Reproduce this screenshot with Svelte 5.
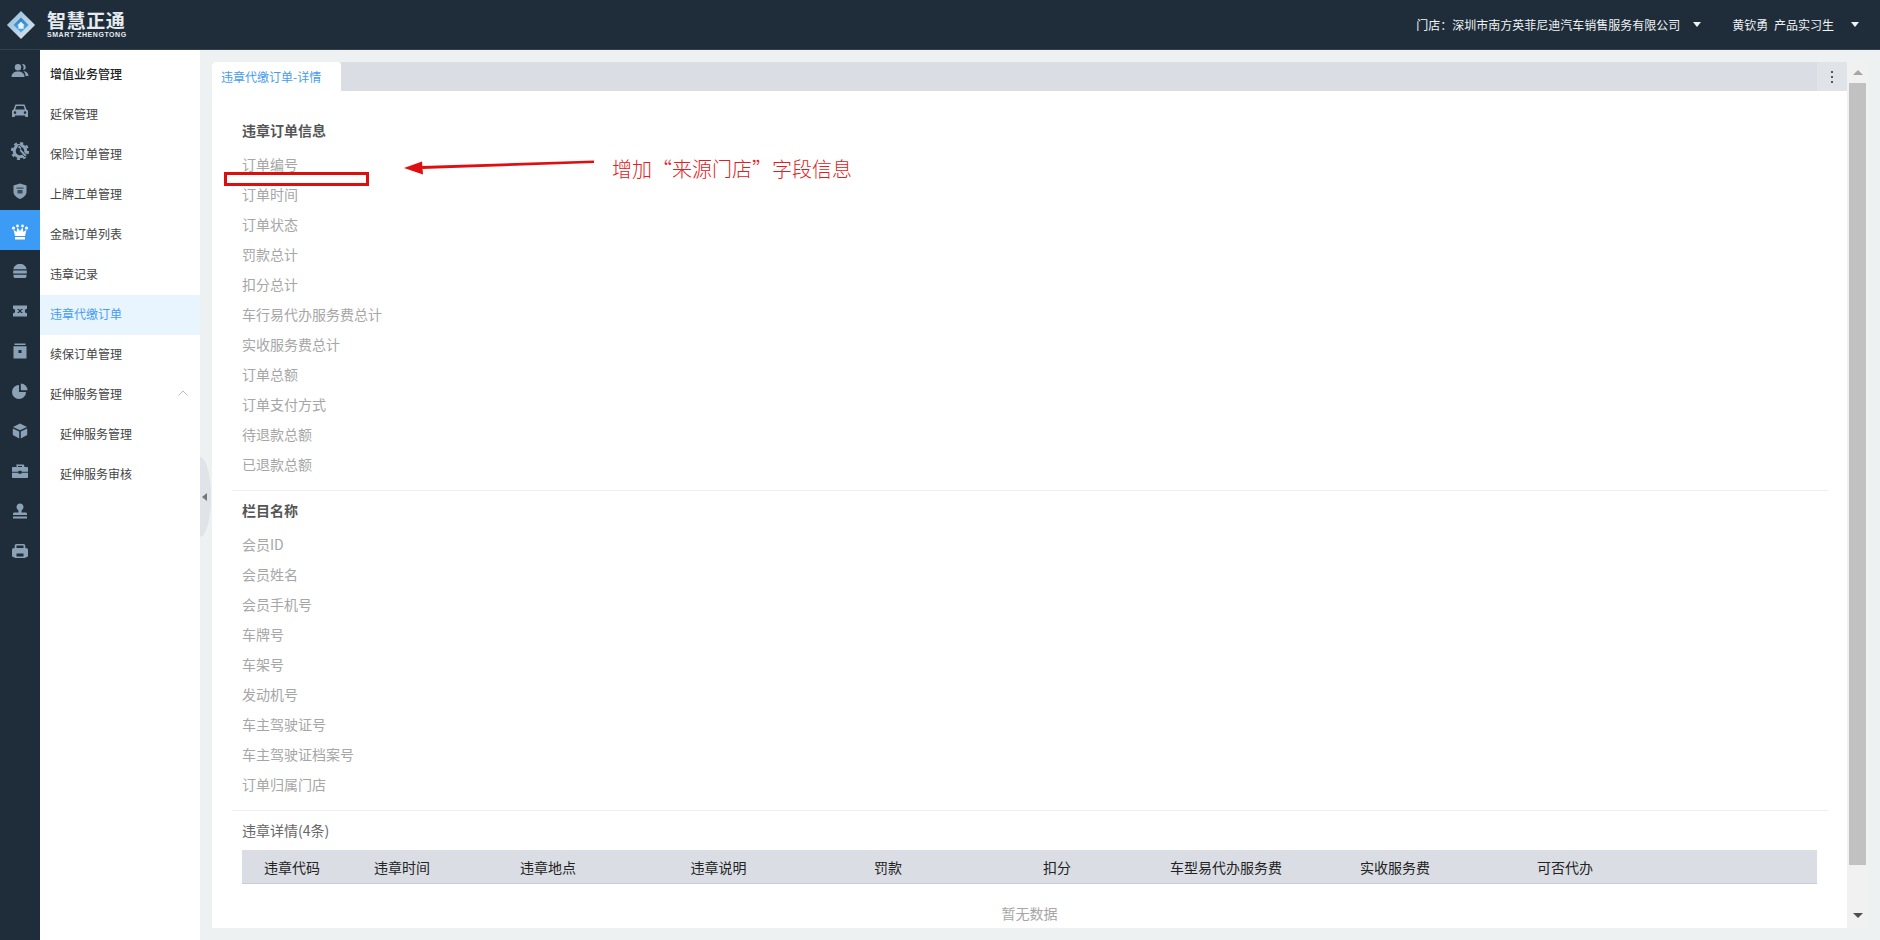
<script>
  const D = '#1f2d3a';
  const icons = [
    `<circle cx="8" cy="6.3" r="3.2"/><path d="M1.500 16c0-3.600 2.600-5.600 6.500-5.600s6.500 2 6.500 5.600z"/><path d="M12 3.200a3 3 0 1 1 1 5.900 5 5 0 0 0-1-5.900zM13.400 10c2.800.3 5.100 2 5.100 5h-3c0-2-.8-3.700-2.100-5z"/>`,
    `<path fill-rule="evenodd" d="M5.500 3.500h9l2 5 1.500 1.200V16h-2.800v-1.500H4.800V16H2V9.700l1.500-1.200zM6.400 5 5.200 8.500h9.600L13.600 5zM5 10.300a1.300 1.300 0 1 0 0 2.600 1.300 1.300 0 0 0 0-2.600zm10 0a1.300 1.300 0 1 0 0 2.600 1.300 1.300 0 0 0 0-2.600z"/>`,
    `<circle cx="10" cy="10" r="5.800" fill="none" stroke="currentColor" stroke-width="3"/><circle cx="10" cy="10" r="8" fill="none" stroke="currentColor" stroke-width="2.200" stroke-dasharray="3 3.280"/><path d="M7.500 6.500 10 8l-.5 2 5.500 6 2-1.500-5.500-6-.2-2.500L9 4z" stroke="${D}" stroke-width=".8"/>`,
    `<path d="M10 2.500l6.500 2v6.200c0 3.400-3 5.700-6.500 7.300-3.500-1.600-6.500-3.900-6.500-7.300V4.500z"/><path d="M6.500 6.500h7v1.200h-7zM7.500 9h5v3.500h-5z" fill="${D}" opacity=".75"/>`,
    `<circle cx="3.500" cy="7" r="1.600"/><circle cx="7.500" cy="5" r="1.400"/><circle cx="12.500" cy="5" r="1.400"/><circle cx="16.500" cy="7" r="1.600"/><path d="M3.500 8.500 6.500 11l1-4.500L10 10l2.500-3.500 1 4.500 3-2.500-1.500 6.500H5zM5 16h10v2.500H5z"/>`,
    `<path d="M3.500 8.200C3.700 5 6.500 3 10 3s6.300 2 6.500 5.200zM3.200 9.500h13.600v3H3.200zM3.500 13.800h13v1.400c0 1-.8 1.800-1.800 1.800H5.300c-1 0-1.800-.8-1.800-1.800z"/>`,
    `<path fill-rule="evenodd" d="M3 4.500h14v3.300a2.200 2.200 0 0 0 0 4.400v3.300H3v-3.300a2.200 2.200 0 0 0 0-4.400zM7 8l2.300 2L7 12h1.700L10 10.900l1.300 1.100H13l-2.300-2L13 8h-1.700L10 9.100 8.700 8z"/>`,
    `<path fill-rule="evenodd" d="M4.500 2.500h11V4h-11zM3.500 5.200h13V17.500h-13zM8.500 9v3h3V9z"/>`,
    `<path d="M9 4a7 7 0 1 0 7 7H9z"/><path d="M10.800 2.500a7 7 0 0 1 6.700 6.800h-6.700z"/>`,
    `<path d="M10 2.500 17 6l-7 3.300L3 6zM2.800 7.500l6.400 3v7L2.800 14zM17.200 7.500l-6.400 3v7l6.400-3.500z"/>`,
    `<path fill-rule="evenodd" d="M7 3.500h6c.8 0 1.300.5 1.300 1.300V6H17c.6 0 1 .4 1 1v3.700h-6.500V9.800h-3v.9H2V7c0-.6.4-1 1-1h3.700V4.800C5.700 4 6.200 3.500 7 3.500zM8 5v1h4V5zM2 11.700h6.500v1h3v-1H18V16c0 .6-.4 1-1 1H3c-.6 0-1-.4-1-1z"/>`,
    `<path d="M10 2.500a3.500 3.500 0 0 1 2.200 6.200c-.6.500-.7 1-.7 1.800v1h4c1 0 1.500.5 1.500 1.500v1H3v-1c0-1 .5-1.500 1.500-1.500h4v-1c0-.8-.1-1.300-.7-1.800A3.500 3.500 0 0 1 10 2.500zM3 15.500h14V17.500H3z"/>`,
    `<path fill-rule="evenodd" d="M6.500 3h7c1 0 1.800.8 1.800 1.800V7h.7C17.200 7 18 7.800 18 9v5.500c0 1.100-.8 1.800-2 1.800h-.7v.7H4.700v-.7H4c-1.200 0-2-.7-2-1.800V9c0-1.200.8-2 2-2h.7V4.800C4.700 3.800 5.500 3 6.500 3zm0 1.500V7h7V4.500zM6.500 12.500v3h7v-3z"/>`
  ];
  const menu = [
    { t: '增值业务管理', k: 'head' },
    { t: '延保管理' },
    { t: '保险订单管理' },
    { t: '上牌工单管理' },
    { t: '金融订单列表' },
    { t: '违章记录' },
    { t: '违章代缴订单', k: 'active' },
    { t: '续保订单管理' },
    { t: '延伸服务管理', k: 'parent' },
    { t: '延伸服务管理', k: 'sub' },
    { t: '延伸服务审核', k: 'sub' }
  ];
  const sec1 = ['订单编号','订单时间','订单状态','罚款总计','扣分总计','车行易代办服务费总计','实收服务费总计','订单总额','订单支付方式','待退款总额','已退款总额'];
  const sec2 = ['会员ID','会员姓名','会员手机号','车牌号','车架号','发动机号','车主驾驶证号','车主驾驶证档案号','订单归属门店'];
  const cols = ['违章代码','违章时间','违章地点','违章说明','罚款','扣分','车型易代办服务费','实收服务费','可否代办'];
</script>

<div class="app">
  <header class="top">
    <div class="brand">
      <svg class="logo" viewBox="0 0 32 32" width="30" height="30">
        <defs>
          <linearGradient id="lg" x1="0" y1="0" x2="1" y2="1">
            <stop offset="0" stop-color="#8fbad8"/>
            <stop offset="1" stop-color="#dfe9f0"/>
          </linearGradient>
          <linearGradient id="lb" x1="0" y1="0" x2="0" y2="1">
            <stop offset="0" stop-color="#2f7fc4"/>
            <stop offset="1" stop-color="#4fb0ea"/>
          </linearGradient>
        </defs>
        <path d="M16 1 31 16 16 31 1 16z" fill="url(#lg)"/>
        <path d="M16 8 24 16 16 24 8 16z" fill="url(#lb)"/>
        <path d="M16 12.500 20 16.500h-1.200V20h-5.600v-3.500H12z" fill="#eaf4fb"/>
      </svg>
      <div class="wordmark">
        <span class="cn">智慧正通</span>
        <span class="en">SMART ZHENGTONG</span>
      </div>
    </div>
    <div class="user">
      <span class="u-item">门店：深圳市南方英菲尼迪汽车销售服务有限公司<i class="caret"></i></span>
      <span class="u-item who">黄钦勇 产品实习生<i class="caret"></i></span>
    </div>
  </header>

  <div class="body">
    <nav class="rail">
      {#each icons as ic, i}
        <div class="rail-item" class:on={i === 4}>
          <svg viewBox="0 0 20 20" width="20" height="20" fill="currentColor">{@html ic}</svg>
        </div>
      {/each}
    </nav>

    <aside class="menu">
      {#each menu as m}
        <div class="m-item {m.k ?? ''}">
          <span>{m.t}</span>
          {#if m.k === 'parent'}
            <svg class="chev" viewBox="0 0 12 8" width="12" height="8"><path d="M1.500 6.500 6 2l4.500 4.500" fill="none" stroke="#bbb" stroke-width="1"/></svg>
          {/if}
        </div>
      {/each}
      <div class="collapse"><i></i></div>
    </aside>

    <main class="main">
      <div class="panel">
        <div class="tabs">
          <div class="tab">违章代缴订单-详情</div>
          <div class="more"><i></i><i></i><i></i></div>
        </div>
        <div class="content">
          <section class="sec first">
            <h3>违章订单信息</h3>
            {#each sec1 as r}<div class="row">{r}</div>{/each}
          </section>
          <section class="sec second">
            <h3>栏目名称</h3>
            {#each sec2 as r}<div class="row">{r}</div>{/each}
          </section>
          <section class="sec third">
            <h4>违章详情(4条)</h4>
            <div class="thead">
              {#each cols as c}<div>{c}</div>{/each}
            </div>
            <div class="empty">暂无数据</div>
          </section>
        </div>
      </div>
      <div class="scroll">
        <i class="up"></i>
        <div class="thumb"></div>
        <i class="down"></i>
      </div>
    </main>
  </div>

  <div class="mark-box"></div>
  <svg class="mark-arrow" viewBox="0 0 200 20" width="200" height="20">
    <path d="M192 3.500 20 9l.2 3L192 6z" fill="#e00f0f"/>
    <path d="M2 11 20 4.500l1 13z" fill="#e00f0f"/>
  </svg>
  <div class="mark-text">增加“来源门店”字段信息</div>
</div>

<style>
  :global(body) {
    margin: 0;
    background: #eef1f2;
    overflow: hidden;
  }
  .app {
    position: relative;
    width: 1880px;
    height: 940px;
    display: flex;
    flex-direction: column;
    overflow: hidden;
    font-family: "Noto Sans CJK SC", "Noto Sans", sans-serif;
    font-size: 12px;
    color: #333;
  }
  .top {
    height: 50px;
    flex: none;
    box-sizing: border-box;
    background: #1f2d3a;
    border-bottom: 1px solid #34414d;
    display: flex;
    align-items: center;
    justify-content: space-between;
    padding: 0 21px 0 6px;
  }
  .brand {
    display: flex;
    align-items: center;
    gap: 11px;
  }
  .logo {
    display: block;
  }
  .wordmark {
    display: flex;
    flex-direction: column;
    width: 80px;
    color: #e6ebef;
  }
  .cn {
    font-size: 19px;
    line-height: 20px;
    font-weight: 700;
    letter-spacing: .6px;
    white-space: nowrap;
  }
  .en {
    font-family: "Liberation Sans", sans-serif;
    font-size: 7px;
    line-height: 9px;
    font-weight: 700;
    letter-spacing: .55px;
    white-space: nowrap;
  }
  .user {
    display: flex;
    align-items: center;
    gap: 31px;
    color: #f0f3f5;
    font-size: 12px;
  }
  .u-item {
    display: flex;
    align-items: center;
    white-space: pre;
  }
  .who {
    word-spacing: 3px;
  }
  .caret {
    width: 0;
    height: 0;
    margin-left: 13px;
    border-left: 4px solid transparent;
    border-right: 4px solid transparent;
    border-top: 5px solid #f0f3f5;
  }
  .who .caret {
    margin-left: 17px;
  }
  .body {
    flex: 1;
    display: flex;
    min-height: 0;
  }
  .rail {
    width: 40px;
    flex: none;
    background: #1f2d3a;
    display: flex;
    flex-direction: column;
  }
  .rail-item {
    height: 40px;
    box-sizing: border-box;
    padding-top: 2px;
    display: flex;
    align-items: center;
    justify-content: center;
    color: #8ba2b6;
  }
  .rail-item svg {
    display: block;
  }
  .rail-item.on {
    background: #3c9bf5;
    color: #fff;
  }
  .menu {
    position: relative;
    width: 160px;
    flex: none;
    background: #fff;
    padding-top: 5px;
    box-sizing: border-box;
  }
  .m-item {
    height: 40px;
    box-sizing: border-box;
    display: flex;
    align-items: center;
    justify-content: space-between;
    padding: 0 11px 4px 10px;
    color: #444;
    white-space: nowrap;
  }
  .m-item.head {
    color: #222;
    font-weight: 500;
  }
  .m-item.active {
    background: #e8f5ff;
    color: #459cf0;
  }
  .m-item.sub {
    padding-left: 20px;
  }
  .chev {
    display: block;
  }
  .collapse {
    position: absolute;
    left: 160px;
    top: 407px;
    width: 11px;
    height: 80px;
    background: #e0e3e8;
    border-radius: 0 11px 11px 0 / 0 40px 40px 0;
    display: flex;
    align-items: center;
    justify-content: center;
  }
  .collapse i {
    width: 0;
    height: 0;
    margin-right: 3px;
    border-top: 4px solid transparent;
    border-bottom: 4px solid transparent;
    border-right: 5px solid #777;
  }
  .main {
    flex: 1;
    display: flex;
    padding: 12px;
    min-width: 0;
    box-sizing: border-box;
  }
  .panel {
    flex: 1;
    min-width: 0;
    background: #fff;
    display: flex;
    flex-direction: column;
    overflow: hidden;
  }
  .tabs {
    height: 29px;
    flex: none;
    background: #dadde4;
    display: flex;
    justify-content: space-between;
  }
  .tab {
    width: 129px;
    box-sizing: border-box;
    padding-left: 9px;
    line-height: 29px;
    background: #fff;
    color: #459cf0;
    border-radius: 3px 3px 0 0;
  }
  .more {
    width: 30px;
    background: #e0e3e8;
    display: flex;
    flex-direction: column;
    align-items: center;
    justify-content: center;
    gap: 3px;
  }
  .more i {
    width: 2px;
    height: 2px;
    background: #555;
  }
  .content {
    padding: 0 19px 0 20px;
  }
  .sec {
    border-bottom: 1px solid #eee;
  }
  .sec h3 {
    margin: 0 0 4px 10px;
    font-size: 14px;
    line-height: 30px;
    font-weight: 700;
    color: #555;
  }
  .row {
    margin-left: 10px;
    font-size: 14px;
    line-height: 30px;
    height: 30px;
    color: #a6a6a6;
  }
  .first {
    padding: 24px 0 11px;
  }
  .second {
    padding: 4px 0 11px;
  }
  .third {
    border-bottom: 0;
    padding-top: 4px;
  }
  .sec h4 {
    margin: 0 0 5px 10px;
    font-size: 14px;
    line-height: 30px;
    font-weight: 400;
    color: #666;
  }
  .thead {
    margin-left: 10px;
    margin-right: 11px;
    height: 34px;
    box-sizing: border-box;
    background: #dadde4;
    border-bottom: 1px solid #c9ccd2;
    display: grid;
    grid-template-columns: 100px 120px 172px 169px 170px 168px 170px 168px 172px 1fr;
    align-items: center;
    text-align: center;
    font-size: 14px;
    color: #222;
  }
  .empty {
    margin-left: 10px;
    margin-right: 11px;
    padding-top: 16px;
    line-height: 26px;
    text-align: center;
    font-size: 14px;
    color: #a6a6a6;
  }
  .scroll {
    width: 21px;
    flex: none;
    background: #f1f1f1;
    display: flex;
    flex-direction: column;
    align-items: center;
  }
  .thumb {
    width: 17px;
    height: 782px;
    margin-top: 8px;
    background: #c1c1c1;
  }
  .up,
  .down {
    width: 0;
    height: 0;
    border-left: 5px solid transparent;
    border-right: 5px solid transparent;
  }
  .up {
    margin-top: 8px;
    border-bottom: 5px solid #a6a6a6;
  }
  .down {
    margin-top: 48px;
    border-top: 5px solid #505050;
  }
  .mark-box {
    position: absolute;
    left: 224px;
    top: 172px;
    width: 145px;
    height: 14px;
    box-sizing: border-box;
    border: 3px solid #dd0e0e;
  }
  .mark-arrow {
    position: absolute;
    left: 402px;
    top: 157px;
  }
  .mark-text {
    position: absolute;
    left: 612px;
    top: 155px;
    font-family: "Noto Sans CJK SC", "Liberation Serif", serif;
    font-weight: 300;
    font-size: 20px;
    line-height: 28px;
    color: #e02020;
    white-space: nowrap;
  }
</style>
